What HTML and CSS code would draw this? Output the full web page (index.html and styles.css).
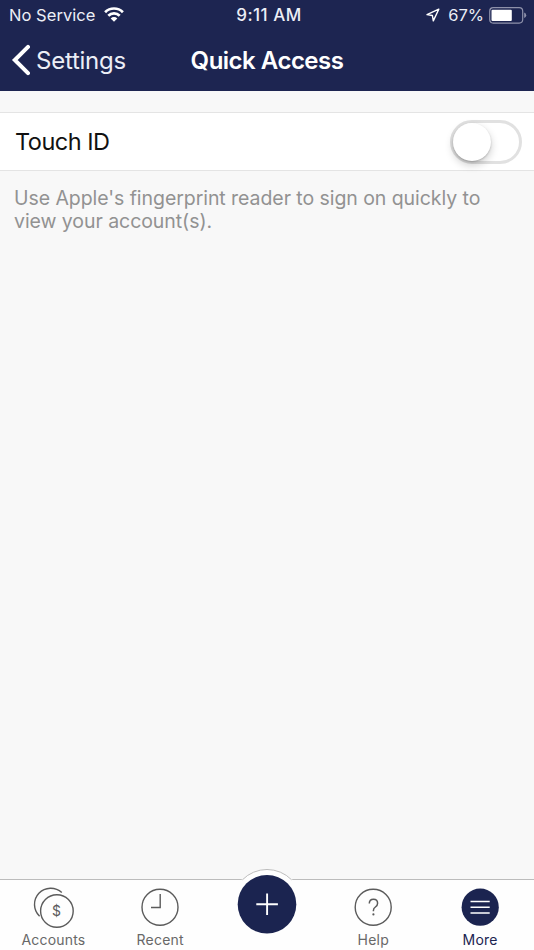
FILE: index.html
```html
<!DOCTYPE html>
<html lang="en">
<head>

    <meta charset="UTF-8">
    <meta name="viewport" content="width=device-width, initial-scale=1.0">
    <title>Quick Access</title>

    <link rel="stylesheet" href="styles.css">

</head>

<body>

    <header class="header">
        <div class="status-bar">
            <div class="status-left">
                <span class="carrier">No Service</span>
                <svg class="wifi" width="20" height="15" viewBox="0 0 20 15">
                    <path d="M1.1 5.2a12.6 12.6 0 0 1 17.8 0M4.3 8.7a8 8 0 0 1 11.4 0" fill="none" stroke="#fff" stroke-width="2.7"/>
                    <path d="M6.7 11.4a4.5 4.5 0 0 1 6.6 0L10 14.8z" fill="#fff"/>
                </svg>
            </div>
            <span class="clock">9:11 AM</span>
            <div class="status-right">
                <svg width="14" height="14" viewBox="0 0 14 14">
                    <path d="M12.8 1.2L1 6.6l5.4.9.9 5.4z" fill="none" stroke="#fff" stroke-width="1.4" stroke-linejoin="round"/>
                </svg>
                <span class="percent">67%</span>
                <svg width="38" height="17" viewBox="0 0 38 17">
                    <rect x=".7" y=".7" width="33" height="15.4" rx="3.5" fill="none" stroke="#8e91aa" stroke-width="1.2"/>
                    <rect x="2.5" y="2.7" width="20.3" height="11.3" rx="1" fill="#fff"/>
                    <path d="M35.2 5.5q2 .8 2 2.8t-2 2.8z" fill="#8e91aa"/>
                </svg>
            </div>
        </div>
        <nav class="nav-bar">
            <a class="back">
                <svg width="19" height="32" viewBox="0 0 19 32">
                    <path d="M17 2.8L3.8 16 17 29.2" fill="none" stroke="#fff" stroke-width="4" stroke-linecap="round"/>
                </svg>
                <span>Settings</span>
            </a>
            <h1 class="title">Quick Access</h1>
        </nav>
    </header>

    <main class="content">
        <div class="setting-row">
            <span class="setting-name">Touch ID</span>
            <div class="toggle"><div class="knob"></div></div>
        </div>
        <p class="hint">Use Apple's fingerprint reader to sign on quickly to<br>view your account(s).</p>
    </main>

    <footer class="tab-bar">
        <a class="tab">
            <svg class="tab-icon" width="48" height="44" viewBox="0 0 48 44">
                <g fill="none" stroke="#5b5b5b" stroke-width="1.4">
                    <path d="M32.8 10.6A16.2 16.2 0 1 0 10.6 34.2"/>
                    <circle cx="27.9" cy="29" r="16.3"/>
                </g>
                <text class="dollar" x="27.7" y="34">$</text>
            </svg>
            <span>Accounts</span>
        </a>
        <a class="tab">
            <svg class="tab-icon" width="48" height="44" viewBox="0 0 48 44">
                <g fill="none" stroke="#5b5b5b" stroke-width="1.4">
                    <circle cx="24" cy="25.2" r="18"/>
                    <path d="M24.2 12v13.5h-9.2"/>
                </g>
            </svg>
            <span>Recent</span>
        </a>
        <a class="tab tab-add">
            <svg class="add" width="70" height="70" viewBox="0 0 70 70">
                <circle cx="35" cy="35" r="35" fill="#fefefe"/>
                <path d="M10.4 10.8A34.5 34.5 0 0 1 59.6 10.8" fill="none" stroke="#bcbcbc"/>
                <circle cx="35" cy="35.3" r="29.3" fill="#1b2450"/>
                <path d="M24.3 35.3h21.6M35.1 24.5v21.6" stroke="#fff" stroke-width="1.9"/>
            </svg>
        </a>
        <a class="tab">
            <svg class="tab-icon" width="48" height="44" viewBox="0 0 48 44">
                <circle cx="23.2" cy="25.2" r="18" fill="none" stroke="#5b5b5b" stroke-width="1.4"/>
                <path d="M19.3 21.6q0-4.4 4.2-4.4 4.1 0 4.1 4 0 2.2-2.2 3.8-2 1.4-2 3.4v.9" fill="none" stroke="#5b5b5b" stroke-width="1.5"/>
                <circle cx="23.4" cy="32.4" r="1.1" fill="#5b5b5b"/>
            </svg>
            <span class="label-shift">Help</span>
        </a>
        <a class="tab active">
            <svg class="tab-icon" width="48" height="44" viewBox="0 0 48 44">
                <circle cx="23.2" cy="25.2" r="18.6" fill="#1b2450"/>
                <path d="M13.5 19.5h19.2M13.5 25.3h19.2M13.5 31h19.2" stroke="#fff" stroke-width="1.5"/>
            </svg>
            <span class="label-shift">More</span>
        </a>
    </footer>

</body>
</html>
```

FILE: styles.css
```css
* {
    box-sizing: border-box;
}

body {

    display: flex;
    flex-direction: column;
    height: 950px;
    margin: 0;
    background-color: #f8f8f8;
    font-family: Inter, "Liberation Sans", sans-serif;
    overflow: hidden;

}

.header {

    height: 91px;
    background-color: #1d2551;
    color: #fff;

}

.status-bar {

    display: grid;
    grid-template-columns: 1fr auto 1fr;
    align-items: center;
    height: 30px;
    padding: 0 7px 0 9px;
    font-size: 16.5px;
    line-height: 30px;
    color: #eceef6;

}

.status-left, .status-right {

    display: flex;
    align-items: center;

}

.status-left {
    gap: 9px;
}

.status-right {
    justify-content: flex-end;
}

.carrier {
    letter-spacing: 0.05px;
}

.wifi {
    margin-bottom: 2px;
}

.clock {

    font-weight: 500;
    font-size: 17px;
    letter-spacing: 0.5px;
    padding-left: 2px;

}

.percent {
    margin: 0 5px 0 8px;
}

.nav-bar {

    display: grid;
    grid-template-columns: 1fr auto 1fr;
    align-items: center;
    height: 60px;
    padding: 0 11px;

}

.back {

    display: flex;
    align-items: center;
    gap: 6px;
    font-size: 24px;
    letter-spacing: -0.25px;
    color: #eceef6;

}

.title {

    margin: 0;
    font-size: 24px;
    font-weight: 600;
    letter-spacing: -0.5px;

}

.content {

    flex: 1;
    padding-top: 21px;

}

.setting-row {

    display: flex;
    align-items: center;
    justify-content: space-between;
    height: 59px;
    padding: 0 12px 0 15px;
    border-top: 1px solid #e4e4e4;
    border-bottom: 1px solid #e4e4e4;
    background-color: #fff;

}

.setting-name {

    font-size: 23.5px;
    letter-spacing: -0.5px;
    color: #111;

}

.toggle {

    width: 72px;
    height: 44px;
    border: 3px solid #e1e1e1;
    border-radius: 22px;
    background-color: #fff;

}

.knob {

    width: 38px;
    height: 38px;
    border-radius: 50%;
    background-color: #fff;
    box-shadow: 0 4px 9px rgba(0, 0, 0, 0.2), 0 1px 2px rgba(0, 0, 0, 0.2);

}

.hint {

    margin: 15.5px 14px;
    font-size: 19.5px;
    line-height: 23.5px;
    letter-spacing: -0.06px;
    color: #929292;

}

.tab-bar {

    display: grid;
    grid-template-columns: repeat(5, 1fr);
    height: 71px;
    border-top: 1px solid #bcbcbc;
    background-color: #fefefe;

}

.tab {

    display: flex;
    flex-direction: column;
    align-items: center;
    padding-top: 2px;
    font-size: 14px;
    line-height: 17px;
    letter-spacing: 0.2px;
    color: #686868;

}

.tab-icon {
    margin-bottom: 5px;
    overflow: visible;
}

.tab-add {
    padding-top: 0;
}

.add {

    flex: none;
    margin-top: -11px;

}

.label-shift {
    padding-right: 1px;
}

.active {
    color: #1b2450;
}

.dollar {

    font-size: 14px;
    fill: #5b5b5b;
    text-anchor: middle;

}
```
